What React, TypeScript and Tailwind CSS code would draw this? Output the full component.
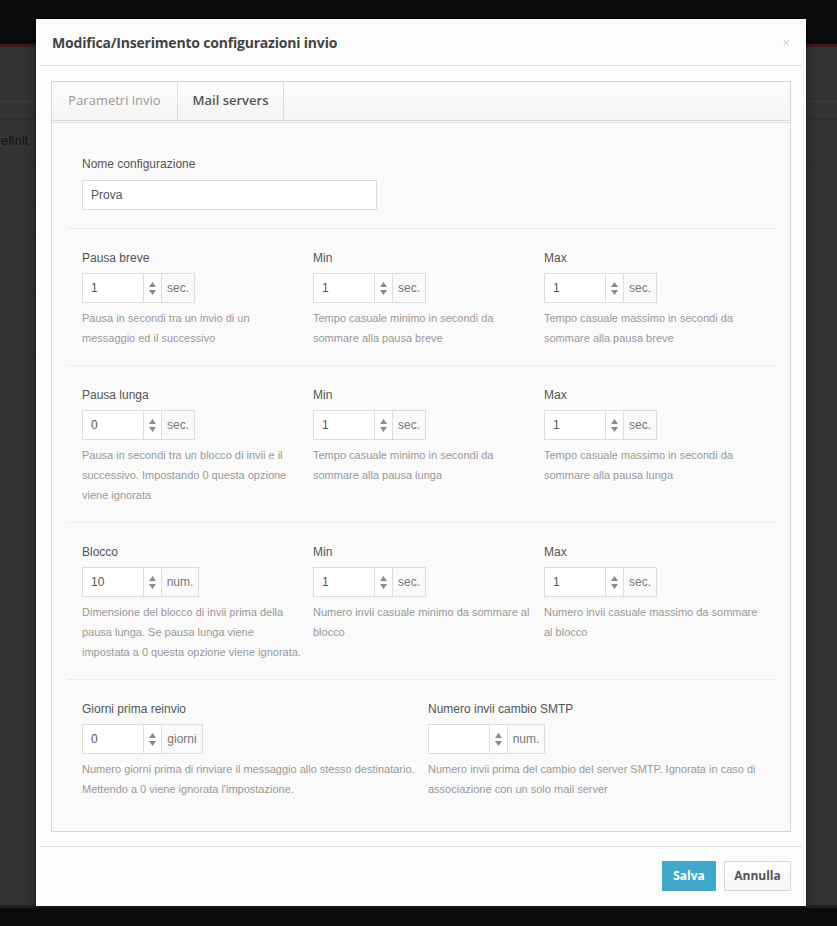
import React from "react";

const Spin = () => (
  <div className="flex w-[18px] flex-col items-center justify-center gap-[3px] border-l border-[#dcdcdc]">
    <svg width="7" height="5" viewBox="0 0 7 5"><path d="M3.5 0L7 5H0z" fill="#8a8a8a" /></svg>
    <svg width="7" height="5" viewBox="0 0 7 5"><path d="M0 0h7L3.5 5z" fill="#8a8a8a" /></svg>
  </div>
);

const NumInput = ({ value, unit, addonW }: { value: string; unit: string; addonW: string }) => (
  <div className="flex h-[30px] w-fit border border-[#dcdcdc] bg-white">
    <div className="flex w-[60px] items-center pl-[8px] text-[12px] text-[#555]">{value}</div>
    <Spin />
    <div className={`flex items-center justify-center border-l border-[#dcdcdc] bg-[#fafafa] text-[12px] text-[#777] ${addonW}`}>{unit}</div>
  </div>
);

type F = { label: string; value: string; unit: string; addonW: string; help: string[] };

const Field = ({ f }: { f: F }) => (
  <div>
    <div className="text-[12px] leading-[16px] text-[#555]">{f.label}</div>
    <div className="mt-[7px]">
      <NumInput value={f.value} unit={f.unit} addonW={f.addonW} />
    </div>
    <div className="mt-[5px] text-[11px] leading-[20px] text-[#999]">
      {f.help.map((h, i) => (
        <div key={i}>{h}</div>
      ))}
    </div>
  </div>
);

const Sep = () => <div className="mx-[-15px] h-px bg-[#ebebeb]" />;

const sec = "w-[33px]";
const rows: F[][] = [
  [
    { label: "Pausa breve", value: "1", unit: "sec.", addonW: sec, help: ["Pausa in secondi tra un invio di un", "messaggio ed il successivo"] },
    { label: "Min", value: "1", unit: "sec.", addonW: sec, help: ["Tempo casuale minimo in secondi da", "sommare alla pausa breve"] },
    { label: "Max", value: "1", unit: "sec.", addonW: sec, help: ["Tempo casuale massimo in secondi da", "sommare alla pausa breve"] },
  ],
  [
    { label: "Pausa lunga", value: "0", unit: "sec.", addonW: sec, help: ["Pausa in secondi tra un blocco di invii e il", "successivo. Impostando 0 questa opzione", "viene ignorata"] },
    { label: "Min", value: "1", unit: "sec.", addonW: sec, help: ["Tempo casuale minimo in secondi da", "sommare alla pausa lunga"] },
    { label: "Max", value: "1", unit: "sec.", addonW: sec, help: ["Tempo casuale massimo in secondi da", "sommare alla pausa lunga"] },
  ],
  [
    { label: "Blocco", value: "10", unit: "num.", addonW: "w-[37px]", help: ["Dimensione del blocco di invii prima della", "pausa lunga. Se pausa lunga viene", "impostata a 0 questa opzione viene ignorata."] },
    { label: "Min", value: "1", unit: "sec.", addonW: sec, help: ["Numero invii casuale minimo da sommare al", "blocco"] },
    { label: "Max", value: "1", unit: "sec.", addonW: sec, help: ["Numero invii casuale massimo da sommare", "al blocco"] },
  ],
];

export default function App() {
  return (
    <div className="relative h-[926px] w-[837px] overflow-hidden bg-[#333333]" style={{ fontFamily: '"Liberation Sans", Arial, sans-serif' }}>
      {/* background page */}
      <div className="h-[44px] bg-[#0b0b0b]" />
      <div className="h-[3px] bg-[#3a1c1c]" />
      <div className="flex flex-col">
        <div className="h-[55px] border-b border-[#3d3d3d]" />
        <div className="h-[18px] border-b border-[#2c2c2c]" />
        <div className="flex h-[42px] items-center border-b border-[#2d2d2d] text-[13px] text-[#141414]">
          <span className="ml-[1px]">efinit</span>
        </div>
        <div className="h-[40px] border-b border-[#2e2e2e]" />
        <div className="h-[36px] border-b border-[#2e2e2e]" />
        <div className="h-[56px] border-b border-[#2e2e2e]" />
        <div className="h-[64px] border-b border-[#2e2e2e]" />
      </div>
      <div className="absolute bottom-0 left-0 right-0 h-[21px] bg-[#0b0b0b]">
        <div className="h-[3px] bg-[#2e1a1a]" />
      </div>

      {/* modal */}
      <div className="absolute left-[36px] top-[19px] w-[770px] bg-[#fcfcfc] shadow-[0_3px_9px_rgba(0,0,0,0.5)]">
        <div className="mx-[4px] flex h-[47px] items-center justify-between border-b border-[#e2e2e2] pl-[12px] pr-[12px]">
          <h4 className="text-[14px] font-bold tracking-[-0.2px] text-[#444]" style={{ fontFamily: '"Open Sans", sans-serif' }}>
            Modifica/Inserimento configurazioni invio
          </h4>
          <span className="text-[13px] leading-none text-[#ccc]">×</span>
        </div>

        <div className="px-[15px] pt-[15px]">
          <div className="border border-[#d6d6d6]">
            <div className="flex h-[39px] border-b border-[#d6d6d6] bg-gradient-to-b from-[#fdfdfd] to-[#f4f4f4]" style={{ fontFamily: '"Open Sans", sans-serif' }}>
              <div className="flex w-[126px] items-center justify-center border-r border-[#dcdcdc] text-[13px] text-[#999]">Parametri invio</div>
              <div className="flex w-[106px] items-center justify-center border-r border-[#dcdcdc] text-[13px] font-semibold text-[#555]">Mail servers</div>
            </div>
            <div className="mt-px border-t border-[#e0e0e0] bg-[#fafafa] px-[30px] pb-[32px] pt-[33px]">
              <div className="pb-[18px]">
                <div className="text-[12px] leading-[16px] text-[#555]">Nome configurazione</div>
                <div className="mt-[8px] flex h-[30px] w-[295px] items-center border border-[#dcdcdc] bg-white pl-[8px] text-[12px] text-[#555]">Prova</div>
              </div>
              {rows.map((r, i) => (
                <React.Fragment key={i}>
                  <Sep />
                  <div className="grid grid-cols-[231px_231px_231px] pb-[17px] pt-[21px]">
                    {r.map((f, j) => (
                      <Field key={j} f={f} />
                    ))}
                  </div>
                </React.Fragment>
              ))}
              <Sep />
              <div className="grid grid-cols-[346px_346px] pt-[21px]">
                <Field f={{ label: "Giorni prima reinvio", value: "0", unit: "giorni", addonW: "w-[41px]", help: ["Numero giorni prima di rinviare il messaggio allo stesso destinatario.", "Mettendo a 0 viene ignorata l'impostazione."] }} />
                <Field f={{ label: "Numero invii cambio SMTP", value: "", unit: "num.", addonW: "w-[37px]", help: ["Numero invii prima del cambio del server SMTP. Ignorata in caso di", "associazione con un solo mail server"] }} />
              </div>
            </div>
          </div>
        </div>

        <div className="mx-[4px] mt-[14px] flex justify-end gap-[8px] border-t border-[#e2e2e2] pb-[15px] pr-[11px] pt-[14px]">
          <button className="h-[30px] w-[54px] bg-[#41a8c9] text-[12px] font-bold text-white" style={{ fontFamily: '"Open Sans", sans-serif' }}>Salva</button>
          <button className="h-[30px] w-[67px] border border-[#d8d8d8] bg-gradient-to-b from-white to-[#f6f6f6] text-[12px] font-bold text-[#555]" style={{ fontFamily: '"Open Sans", sans-serif' }}>Annulla</button>
        </div>
      </div>
    </div>
  );
}
